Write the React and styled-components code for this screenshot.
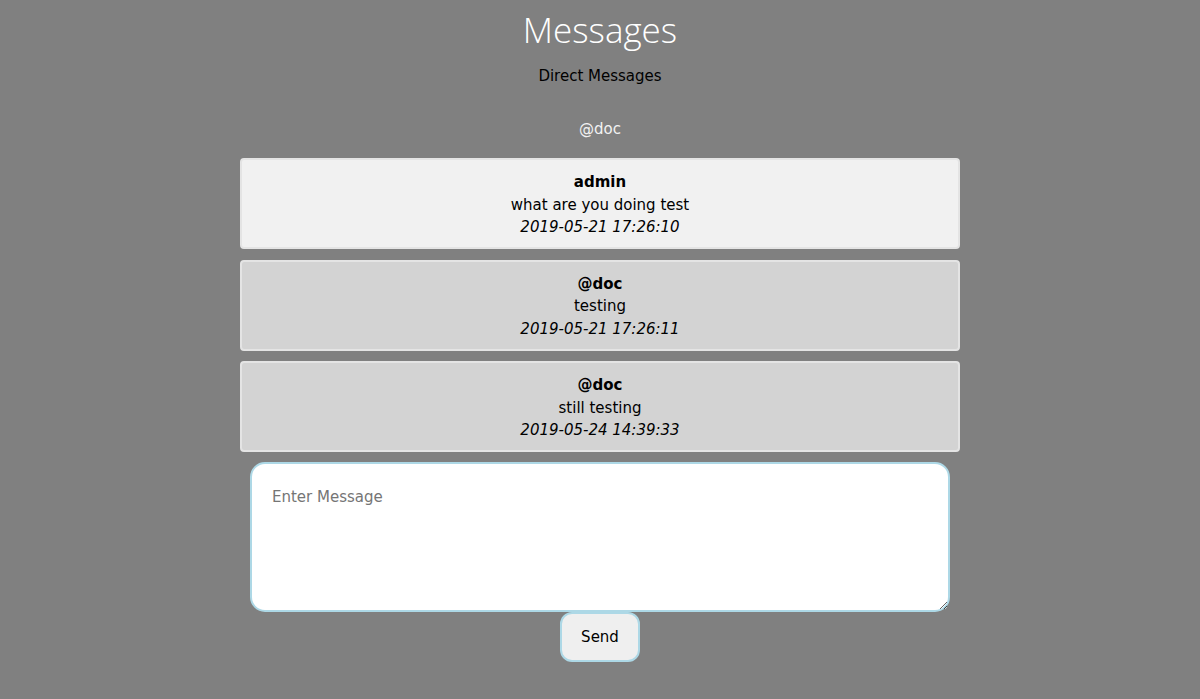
import React from 'react'
import styled, { createGlobalStyle } from 'styled-components'

const messages = [
    { from: 'admin', text: 'what are you doing test', time: '2019-05-21 17:26:10', mine: false },
    { from: '@doc', text: 'testing', time: '2019-05-21 17:26:11', mine: true },
    { from: '@doc', text: 'still testing', time: '2019-05-24 14:39:33', mine: true },
]

const GlobalStyle = createGlobalStyle`
    body {
        margin: 0;
        background-color: #808080;
        font-family: "DejaVu Sans", Verdana, sans-serif;
        font-size: 15px;
    }
`

const App = () => {
    return (
        <Page>
            <GlobalStyle />
            <Title>Messages</Title>
            <Subtitle>Direct Messages</Subtitle>
            <Recipient>@doc</Recipient>
            <Thread>
                {messages.map((m, i) => (
                    <Card key={i} $mine={m.mine}>
                        <Sender>{m.from}</Sender>
                        <Body>{m.text}</Body>
                        <Time>{m.time}</Time>
                    </Card>
                ))}
            </Thread>
            <Compose>
                <Input placeholder="Enter Message" />
                <SendButton>Send</SendButton>
            </Compose>
        </Page>
    )
}

const Page = styled.div`
    display: flex;
    flex-direction: column;
    align-items: center;
    min-height: 699px;
`
const Title = styled.h1`
    margin: 8px 0 0;
    font-family: "Open Sans", "Noto Sans", sans-serif;
    font-weight: 300;
    font-size: 35px;
    line-height: 44px;
    color: #fff;
`
const Subtitle = styled.div`
    margin-top: 15px;
    color: #000;
    line-height: 18px;
`
const Recipient = styled.div`
    margin-top: 35px;
    color: #f2f2f2;
    line-height: 18px;
`
const Thread = styled.div`
    width: 720px;
    margin-top: 20px;
    display: flex;
    flex-direction: column;
    gap: 10.5px;
`
const Card = styled.div`
    box-sizing: border-box;
    height: 91px;
    padding: 11px 0;
    border: 2px solid #e4e4e4;
    border-radius: 4px;
    background-color: ${p => (p.$mine ? '#d3d3d3' : '#f1f1f1')};
    text-align: center;
    line-height: 22.5px;
    color: #000;
`
const Sender = styled.div`
    font-weight: bold;
`
const Body = styled.div``
const Time = styled.div`
    font-style: italic;
`
const Compose = styled.div`
    margin-top: 10px;
    display: flex;
    flex-direction: column;
    align-items: center;
`
const Input = styled.textarea`
    box-sizing: border-box;
    width: 700px;
    height: 150px;
    padding: 24px 20px;
    border: 2px solid #add8e6;
    border-radius: 15px;
    background: #fff;
    font-family: "DejaVu Sans", Verdana, sans-serif;
    font-size: 15px;
    outline: none;
    &::placeholder {
        color: #757575;
    }
`
const SendButton = styled.button`
    box-sizing: border-box;
    width: 80px;
    height: 50px;
    border: 2px solid #add8e6;
    border-radius: 12px;
    background-color: #efefef;
    font-family: "DejaVu Sans", Verdana, sans-serif;
    font-size: 15px;
    color: #000;
`

export default App
